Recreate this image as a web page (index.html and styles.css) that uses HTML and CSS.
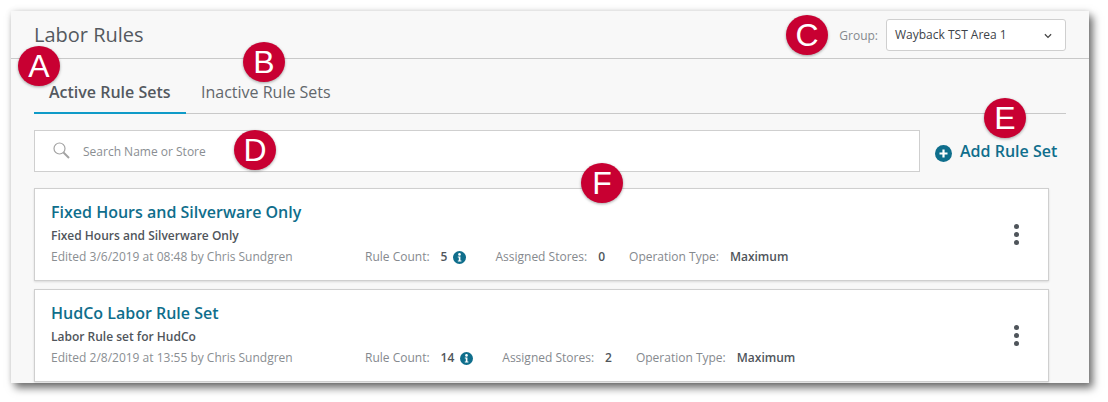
FILE: index.html
```html
<!DOCTYPE html>
<html lang="en">
<head>
<meta charset="utf-8">
<title>Labor Rules</title>
<link rel="stylesheet" href="styles.css">
</head>
<body>
<div class="window">
  <header class="header">
    <h1 class="title">Labor Rules</h1>
    <div class="group">
      <span class="group-label">Group:</span>
      <div class="select">
        <span>Wayback TST Area 1</span>
        <svg class="chevron" width="8" height="6" viewBox="0 0 9 6"><path d="M1 1l3.5 3.5L8 1" fill="none" stroke="#444" stroke-width="1.4"/></svg>
      </div>
    </div>
  </header>
  <main class="content">
    <nav class="tabs">
      <div class="tab active">Active Rule Sets</div>
      <div class="tab">Inactive Rule Sets</div>
    </nav>
    <div class="toolbar">
      <div class="search">
        <svg class="search-icon" width="18" height="18" viewBox="0 0 18 18"><circle cx="6.5" cy="6.5" r="5.5" fill="none" stroke="#a3a3a3" stroke-width="1.2"/><path d="M10.5 10.5l5.5 5.5" stroke="#a3a3a3" stroke-width="2"/></svg>
        <span>Search Name or Store</span>
      </div>
      <div class="add">
        <svg class="add-icon" width="17" height="17" viewBox="0 0 17 17"><circle cx="8.5" cy="8.5" r="8.5" fill="#0f6e8c"/><path d="M8.5 4.5v8M4.5 8.5h8" stroke="#fff" stroke-width="2.2"/></svg>
        <span>Add Rule Set</span>
      </div>
    </div>
    <section class="card">
      <div class="card-main">
        <h2 class="card-title">Fixed Hours and Silverware Only</h2>
        <div class="card-desc">Fixed Hours and Silverware Only</div>
        <div class="meta">
          <span class="edited">Edited 3/6/2019 at 08:48 by Chris Sundgren</span>
          <span class="key">Rule Count:</span><span class="val count">5</span>
          <svg class="info" width="13" height="13" viewBox="0 0 13 13"><circle cx="6.5" cy="6.5" r="6.5" fill="#0f6e8c"/><circle cx="6.5" cy="3.4" r="1.3" fill="#fff"/><path d="M4.8 5.4h2.6v4h1v1.1H4.8V9.4h1V6.5h-1z" fill="#fff"/></svg>
          <span class="key stores">Assigned Stores:</span><span class="val">0</span>
          <span class="key op">Operation Type:</span><span class="val">Maximum</span>
        </div>
      </div>
      <div class="kebab"><i></i><i></i><i></i></div>
    </section>
    <section class="card">
      <div class="card-main">
        <h2 class="card-title">HudCo Labor Rule Set</h2>
        <div class="card-desc">Labor Rule set for HudCo</div>
        <div class="meta">
          <span class="edited">Edited 2/8/2019 at 13:55 by Chris Sundgren</span>
          <span class="key">Rule Count:</span><span class="val count">14</span>
          <svg class="info" width="13" height="13" viewBox="0 0 13 13"><circle cx="6.5" cy="6.5" r="6.5" fill="#0f6e8c"/><circle cx="6.5" cy="3.4" r="1.3" fill="#fff"/><path d="M4.8 5.4h2.6v4h1v1.1H4.8V9.4h1V6.5h-1z" fill="#fff"/></svg>
          <span class="key stores">Assigned Stores:</span><span class="val">2</span>
          <span class="key op">Operation Type:</span><span class="val">Maximum</span>
        </div>
      </div>
      <div class="kebab"><i></i><i></i><i></i></div>
    </section>
  </main>
  <div class="badge badge-a">A</div>
  <div class="badge badge-b">B</div>
  <div class="badge badge-c">C</div>
  <div class="badge badge-d">D</div>
  <div class="badge badge-e">E</div>
  <div class="badge badge-f">F</div>
</div>
</body>
</html>
```
FILE: styles.css
```css
* { box-sizing: border-box; }
html, body { margin: 0; height: 100%; overflow: hidden; background: #fff; }
body { font-family: "Open Sans", sans-serif; color: #4a4f55; padding: 11px 19px 0 11px; }

.window {
  position: relative;
  width: 1078px;
  height: 372px;
  background: #f8f8f8;
  box-shadow: 4px 5px 8px rgba(0,0,0,.55), 0 0 6px rgba(0,0,0,.12);
}

.header {
  height: 48px;
  display: flex;
  align-items: flex-start;
  justify-content: space-between;
  padding: 8px 23px 0;
  border-bottom: 1px solid #c9c9c9;
}
.title { margin: 0; font-size: 20px; line-height: 32px; font-weight: 400; color: #54595f; }
.group { display: flex; align-items: center; gap: 8px; }
.group-label { font-size: 12px; color: #85898e; }
.select {
  width: 180px;
  height: 32px;
  padding: 0 13px 2px 8px;
  display: flex;
  align-items: center;
  justify-content: space-between;
  background: #fff;
  border: 1px solid #cfcfcf;
  border-radius: 3px;
  font-size: 12px;
  color: #3d4349;
}
.chevron { margin-top: 3px; }

.content { padding: 0 23px; }
.tabs { display: flex; width: 1032px; height: 55px; border-bottom: 1px solid #c9c9c9; }
.tab { height: 55px; padding: 22px 15px 0; font-size: 16px; line-height: 23px; color: #62676c; }
.tab.active { width: 152px; font-weight: 600; color: #54595f; border-bottom: 2px solid #0f9bc8; white-space: nowrap; }

.toolbar { display: flex; margin-top: 16px; height: 42px; }
.search {
  width: 886px;
  display: flex;
  align-items: center;
  padding-left: 18px;
  gap: 12px;
  background: #fff;
  border: 1px solid #cfcfcf;
  font-size: 12px;
  color: #8a8e92;
}
.search-icon { flex: none; }
.add {
  display: flex;
  align-items: center;
  gap: 8px;
  margin-left: 15px;
  font-size: 16px;
  font-weight: 600;
  color: #0f6e8c;
}
.add-icon { margin-top: 4px; }

.card {
  width: 1015px;
  height: 93px;
  margin-top: 8px;
  display: flex;
  justify-content: space-between;
  background: #fff;
  border: 1px solid #cfcfcf;
  box-shadow: 0 1px 2px rgba(0,0,0,.12);
  padding: 12px 29px 0 16px;
}
.toolbar + .card { margin-top: 16px; }
.card-title { margin: 0; font-size: 16px; line-height: 22px; font-weight: 600; color: #0f6e8c; }
.card-desc { margin-top: 5px; font-size: 12px; line-height: 16px; font-weight: 600; color: #50555b; }
.meta { display: flex; align-items: center; margin-top: 5px; font-size: 12px; line-height: 16px; }
.edited { width: 314px; color: #8a8e92; }
.key { color: #85898e; }
.val { margin-left: 11px; font-weight: 600; color: #50555b; }
.count { margin-right: 6px; }
.stores { margin-left: 29px; }
.op { margin-left: 24px; }
.kebab { display: flex; flex-direction: column; gap: 3px; margin-top: 23px; }
.kebab i { width: 5px; height: 5px; border-radius: 50%; background: #4f555b; }

.badge {
  position: absolute;
  width: 42px;
  height: 40px;
  border-radius: 50%;
  background: #c80032;
  color: #fff;
  box-shadow: 0 1px 3px rgba(0,0,0,.35);
  font-family: "Liberation Sans", Arial, sans-serif;
  font-size: 32px;
  line-height: 40px;
  text-align: center;
}
.badge-a { left: 7px; top: 35px; }
.badge-b { left: 232px; top: 31px; }
.badge-c { left: 775px; top: 4px; }
.badge-d { left: 223px; top: 119px; }
.badge-e { left: 973px; top: 87px; }
.badge-f { left: 570px; top: 152px; }
```
